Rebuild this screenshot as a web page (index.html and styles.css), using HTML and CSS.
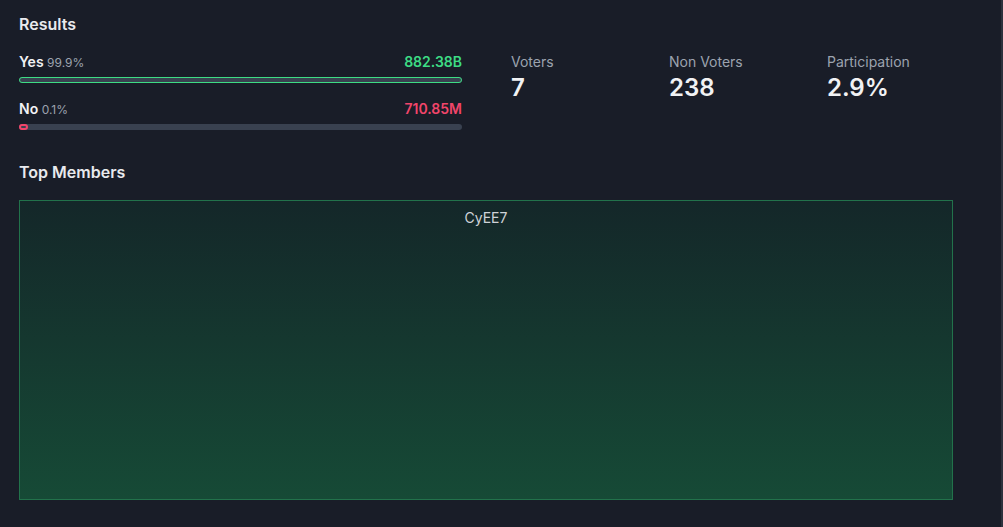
FILE: index.html
```html
<!DOCTYPE html>
<html lang="en">
<head>
  <meta charset="UTF-8" />
  <meta name="viewport" content="width=device-width, initial-scale=1.0"/>
  <title>Proposal Results</title>
  <link rel="stylesheet" href="styles.css">
</head>
<body>
  <div class="panel">
    <h2 class="section-title">Results</h2>
    <div class="results">
      <div class="options">
        <div class="option">
          <div class="option-head">
            <span class="option-name">Yes <span class="option-pct">99.9%</span></span>
            <span class="option-value yes">882.38B</span>
          </div>
          <div class="track">
            <div class="fill yes" style="width: 100%"></div>
          </div>
        </div>
        <div class="option">
          <div class="option-head">
            <span class="option-name">No <span class="option-pct">0.1%</span></span>
            <span class="option-value no">710.85M</span>
          </div>
          <div class="track">
            <div class="fill no" style="width: 9px"></div>
          </div>
        </div>
      </div>
      <div class="stats">
        <div class="stat">
          <div class="stat-label">Voters</div>
          <div class="stat-value">7</div>
        </div>
        <div class="stat">
          <div class="stat-label">Non Voters</div>
          <div class="stat-value">238</div>
        </div>
        <div class="stat">
          <div class="stat-label">Participation</div>
          <div class="stat-value">2.9%</div>
        </div>
      </div>
    </div>

    <h2 class="section-title members-title">Top Members</h2>
    <div class="treemap">
      <div class="tile">CyEE7</div>
    </div>
  </div>
</body>
</html>
```

FILE: styles.css
```css
body {
  margin: 0;
  background: #191d28;
  font-family: 'Inter', 'Noto Sans', sans-serif;
  color: #e5e7eb;
}

.panel {
  height: 527px;
  box-sizing: border-box;
  padding: 14px 0 0 19px;
  border-right: 2px solid #2c313d;
}

.section-title {
  margin: 0;
  font-size: 16px;
  line-height: 20px;
  font-weight: 600;
  color: #e8eaee;
}

.results {
  display: flex;
  gap: 49px;
  margin-top: 18px;
}

.options {
  width: 443px;
  flex-shrink: 0;
  display: flex;
  flex-direction: column;
  gap: 16px;
}

.option-head {
  display: flex;
  justify-content: space-between;
  align-items: baseline;
  line-height: 20px;
}

.option-name {
  font-size: 14px;
  font-weight: 600;
  color: #f1f2f4;
}

.option-pct {
  font-size: 12px;
  font-weight: 400;
  color: #9ca3af;
}

.option-value {
  font-size: 14px;
  font-weight: 600;
}

.option-value.yes { color: #3ddc84; }
.option-value.no { color: #f1456a; }

.track {
  margin-top: 4px;
  height: 6px;
  border-radius: 4px;
  background: #394150;
}

.fill {
  height: 6px;
  box-sizing: border-box;
  border-radius: 4px;
  border: 1.5px solid;
}

.fill.yes { border-color: #3ddc84; }
.fill.no { border-color: #f1456a; border-width: 2px; }

.stats {
  display: flex;
}

.stat {
  width: 158px;
}

.stat-label {
  font-size: 14px;
  line-height: 20px;
  color: #9ca3af;
}

.stat-value {
  margin-top: 2px;
  font-size: 24px;
  line-height: 28px;
  font-weight: 600;
  color: #f1f2f4;
}

.members-title {
  margin-top: 32px;
}

.treemap {
  margin-top: 18px;
  width: 934px;
  height: 300px;
}

.tile {
  height: 100%;
  box-sizing: border-box;
  padding-top: 7px;
  border: 1px solid #22724b;
  background: linear-gradient(180deg, #142729 0%, #164a36 100%);
  text-align: center;
  font-size: 14px;
  line-height: 20px;
  color: #cfd3d8;
}
```
